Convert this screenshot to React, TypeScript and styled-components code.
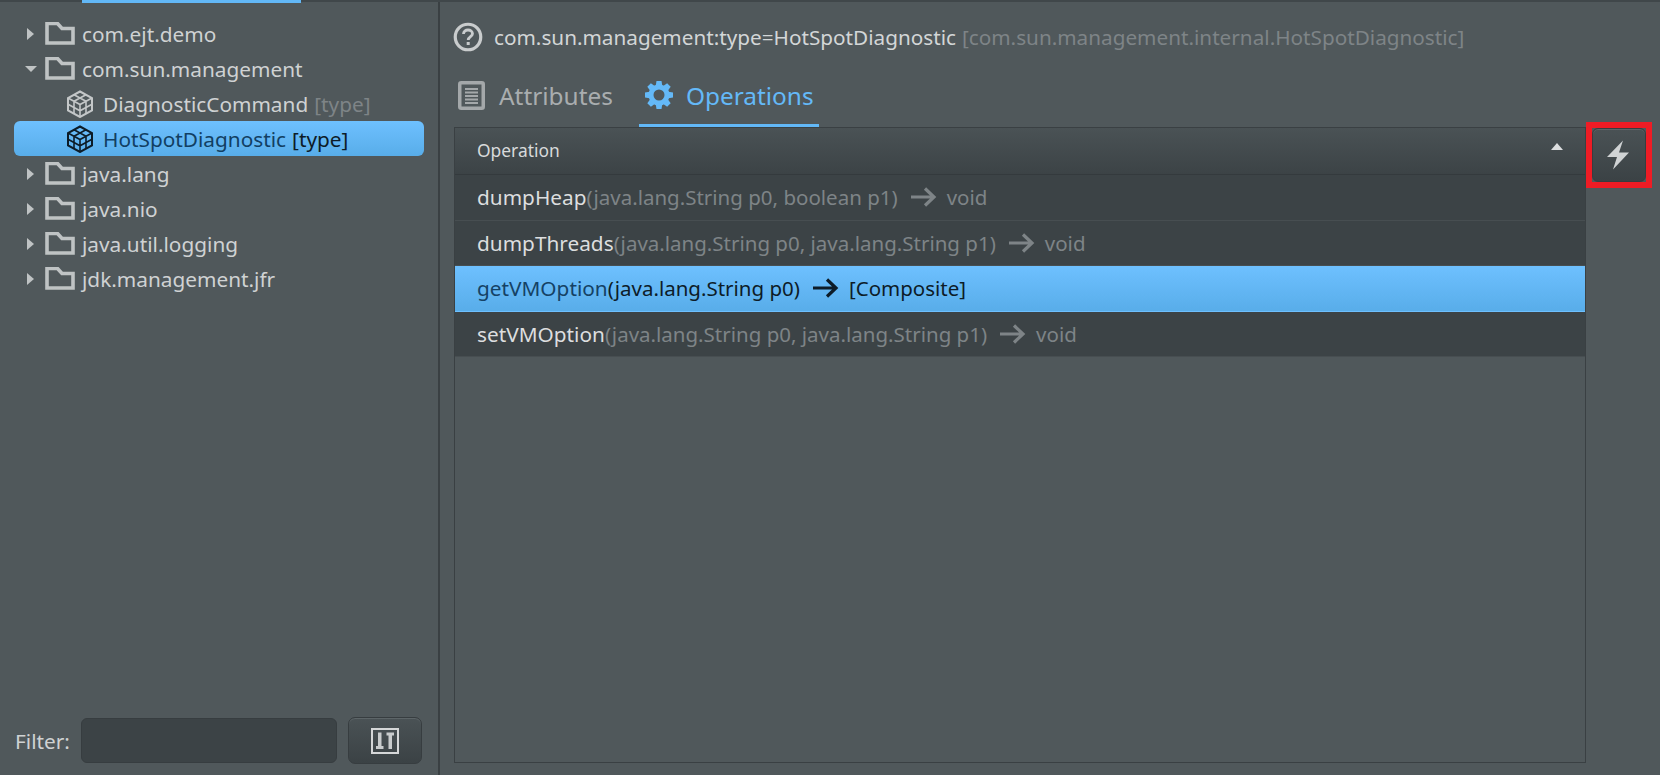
import React from "react";
import styled, { createGlobalStyle } from "styled-components";

const Global = createGlobalStyle`
  html, body { margin: 0; padding: 0; height: 775px; overflow: hidden; background: #50585b; }
  #root { height: 775px; }
  * { box-sizing: border-box; }
`;

const Page = styled.div`
  display: flex; width: 1660px; height: 775px; background: #50585b;
  font-family: "Noto Sans", "Open Sans", sans-serif; font-size: 20.8px; color: #cfd2d3;
  border-top: 2px solid #40474a; position: relative;
`;
const TopStripe = styled.div`
  position: absolute; left: 82px; top: -2px; width: 219px; height: 3px; background: #62b8f7;
`;
const Side = styled.aside`
  width: 440px; flex: none; display: flex; flex-direction: column;
  border-right: 2px solid #3a4043; padding: 14px 14px 11px 14px;
`;
const Tree = styled.div` flex: 1; display: flex; flex-direction: column; `;
const Row = styled.div<{ $depth: number; $sel?: boolean }>`
  height: 35px; display: flex; align-items: center; flex: none; width: 410px;
  padding: 1px 0 0 ${p => p.$depth === 0 ? 10 : 52}px;
  border-radius: 6px; line-height: 34px; white-space: nowrap;
  color: ${p => p.$sel ? "#123f63" : "#cfd2d3"};
  background: ${p => p.$sel ? "linear-gradient(#6ec0ff, #58ade9)" : "transparent"};
  svg { margin-top: -1px; }
`;
const Twist = styled.svg` width: 14px; height: 14px; flex: none; margin-right: 7px; `;
const FolderIcon = styled.svg` width: 30px; height: 23px; flex: none; margin-right: 7px; `;
const CubeIcon = styled.svg` width: 28px; height: 28px; flex: none; margin-right: 9px; `;
const Dim = styled.span` color: #7e8487; margin-left: 6px; `;
const DarkType = styled.span` color: #0d1c28; margin-left: 6px; `;
const FilterBar = styled.div` display: flex; align-items: center; height: 47px; flex: none; padding-left: 1px; `;
const FilterLabel = styled.label` width: 66px; color: #cfd2d3; `;
const FilterInput = styled.input`
  width: 256px; height: 45px; background: #3c4346; border: 1px solid #373d40; border-radius: 6px; outline: none;
`;
const ToolButton = styled.button`
  width: 74px; height: 47px; margin-left: 11px; padding: 0; display: flex; align-items: center; justify-content: center;
  background: linear-gradient(#4a5255, #3b4245); border: 1px solid #373d40; border-radius: 7px;
  box-shadow: inset 0 1px 0 #5d6568;
`;
const Main = styled.main`
  flex: 1; min-width: 0; display: flex; flex-direction: column; padding: 0 0 12px 14px;
`;
const Title = styled.div`
  height: 66px; display: flex; align-items: center; padding: 4px 0 0 0; flex: none; white-space: nowrap;
  color: #d3d6d7; font-size: 20.73px;
`;
const HelpIcon = styled.svg` width: 30px; height: 30px; flex: none; margin-right: 11px; margin-left: -1px; margin-top: -1px; `;
const TitleDim = styled.span` color: #7e8487; margin-left: 6px; `;
const Tabs = styled.div` display: flex; height: 59px; flex: none; `;
const Tab = styled.div<{ $active?: boolean }>`
  display: flex; align-items: center; font-size: 24.4px; height: 59px; padding: 0 5px 2px;
  color: ${p => p.$active ? "#64b9f8" : "#a9adaf"};
  border-bottom: 3px solid ${p => p.$active ? "#62b8f7" : "transparent"};
  &:first-child { padding-left: 4px; }
  & + & { margin-left: 21px; }
  svg { flex: none; margin-right: 12px; }
  &:first-child svg { margin-right: 14px; }
`;
const Content = styled.div` flex: 1; display: flex; min-height: 0; `;
const Table = styled.div`
  width: 1132px; flex: none; border: 1px solid #3a4043; display: flex; flex-direction: column;
`;
const THead = styled.div`
  height: 47px; flex: none; display: flex; align-items: center; justify-content: space-between;
  padding: 0 22px 2px 22px; font-size: 17.4px; color: #d8dadb;
  background: linear-gradient(#4a5255, #3c4346); border-bottom: 1px solid #343a3d;
`;
const SortIcon = styled.svg` width: 12px; height: 7px; margin-top: -7px; `;
const TRow = styled.div<{ $sel?: boolean }>`
  height: 45.5px; flex: none; display: flex; align-items: center; padding-left: 22px; white-space: nowrap;
  background: ${p => p.$sel ? "linear-gradient(#6ec0ff, #58ade9)" : "#3c4346"};
  border-bottom: 1px solid ${p => p.$sel ? "transparent" : "#474e51"};
`;
const OpName = styled.span<{ $sel?: boolean }>` font-size: 20.8px; color: ${p => p.$sel ? "#154265" : "#dcdedf"}; `;
const OpArgs = styled.span<{ $sel?: boolean }>` font-size: 20.5px; color: ${p => p.$sel ? "#0d1c28" : "#7e8487"}; `;
const Arrow = styled.svg` width: 27px; height: 22px; margin: 0 10px 0 12px; flex: none; `;
const Side2 = styled.div` margin-left: 0; `;
const Mark = styled.div`
  width: 66px; height: 66px; margin-top: -5px; border: 6px solid #ee1c25; display: flex; align-items: stretch;
`;
const RunButton = styled.button`
  flex: 1; padding: 0 2px 0 0; display: flex; align-items: center; justify-content: center;
  background: linear-gradient(#4a5255, #3b4245); border: 1px solid #373d40; border-radius: 6px;
  box-shadow: inset 0 1px 0 #5d6568;
`;

const c = "#bfc3c4";
const Folder = () => (
  <FolderIcon viewBox="0 0 30 23">
    <path d="M2 1.5H12.5L17 6.5H28V21H2Z" fill="none" stroke={c} strokeWidth="3.6" />
  </FolderIcon>
);
const Caret = ({ open }: { open?: boolean }) => (
  <Twist viewBox="0 0 14 14">
    {open ? <path d="M1 4H13L7 10Z" fill={c} /> : <path d="M3 1L10 7L3 13Z" fill={c} />}
  </Twist>
);
const Cube = ({ color }: { color: string }) => (
  <CubeIcon viewBox="0 0 28 28">
    <g fill="none" stroke={color}>
      <path strokeWidth="2" d="M14 1.5L26 8V20.5L14 27L2 20.5V8Z" />
      <path strokeWidth="1.6" d="M2 8L14 14.5L26 8M14 14.5V27M8 4.75L20 11.25M20 4.75L8 11.25M8 11.25V23.75M20 11.25V23.75M2 14.25L14 20.75L26 14.25" />
    </g>
  </CubeIcon>
);
const Gear = () => (
  <svg width="30" height="30" viewBox="0 0 30 30">
    {[0, 45, 90, 135, 180, 225, 270, 315].map(a => (
      <path key={a} d="M12.5 1H17.5L18.5 7H11.5Z" fill="#64b9f8" transform={`rotate(${a} 15 15)`} />
    ))}
    <circle cx="15" cy="15" r="8" fill="none" stroke="#64b9f8" strokeWidth="5" />
  </svg>
);
const RightArrow = ({ color }: { color: string }) => (
  <Arrow viewBox="0 0 27 22">
    <path d="M1 11H24M15 2.5L24 11L15 19.5" fill="none" stroke={color} strokeWidth="3.2" />
  </Arrow>
);

const rows: { label: string; open?: boolean }[] = [
  { label: "com.ejt.demo" },
  { label: "com.sun.management", open: true },
];
const rest = ["java.lang", "java.nio", "java.util.logging", "jdk.management.jfr"];

export default function App() {
  return (
    <Page>
      <Global />
      <TopStripe />
      <Side>
        <Tree>
          {rows.map(r => (
            <Row key={r.label} $depth={0}><Caret open={r.open} /><Folder />{r.label}</Row>
          ))}
          <Row $depth={1}><Cube color="#c4c7c8" />DiagnosticCommand<Dim>[type]</Dim></Row>
          <Row $depth={1} $sel><Cube color="#0d1c28" />HotSpotDiagnostic<DarkType>[type]</DarkType></Row>
          {rest.map(l => (
            <Row key={l} $depth={0}><Caret /><Folder />{l}</Row>
          ))}
        </Tree>
        <FilterBar>
          <FilterLabel>Filter:</FilterLabel>
          <FilterInput />
          <ToolButton aria-label="Options">
            <svg width="28" height="26" viewBox="0 0 28 26">
              <rect x="1" y="1" width="26" height="24" fill="none" stroke="#d5d7d8" strokeWidth="2" />
              <path d="M7 4.5H10.5V18H12.5V21H5V18H7Z" fill="#c9cccd" />
              <path d="M15.5 4.5H23V7.5H21V21H17.5V7.5H15.5Z" fill="#c9cccd" />
            </svg>
          </ToolButton>
        </FilterBar>
      </Side>
      <Main>
        <Title>
          <HelpIcon viewBox="0 0 30 30">
            <circle cx="15" cy="15" r="12.75" fill="none" stroke="#c9cccd" strokeWidth="3.2" />
            <path d="M10.5 12C10.5 9.5 12.5 8 15 8C17.5 8 19.5 9.5 19.5 11.8C19.5 14.5 15.2 14.8 15.2 18" fill="none" stroke="#c9cccd" strokeWidth="2.8" />
            <rect x="13.7" y="20" width="3" height="3" fill="#c9cccd" />
          </HelpIcon>
          com.sun.management:type=HotSpotDiagnostic
          <TitleDim>[com.sun.management.internal.HotSpotDiagnostic]</TitleDim>
        </Title>
        <Tabs>
          <Tab>
            <svg width="27" height="29" viewBox="0 0 27 29">
              <rect x="1.75" y="1.75" width="23.5" height="25.5" rx="1.5" fill="none" stroke="#a4a8aa" strokeWidth="3.5" />
              <path d="M7 8H20M7 11.5H20M7 15H20M7 18.5H20M7 22H20" stroke="#a4a8aa" strokeWidth="1.9" />
            </svg>
            Attributes
          </Tab>
          <Tab $active><Gear />Operations</Tab>
        </Tabs>
        <Content>
          <Table>
            <THead>
              Operation
              <SortIcon viewBox="0 0 12 7"><path d="M6 0L12 7H0Z" fill="#dcdedf" /></SortIcon>
            </THead>
            <TRow>
              <OpName>dumpHeap</OpName><OpArgs>(java.lang.String p0, boolean p1)</OpArgs>
              <RightArrow color="#7e8487" /><OpArgs>void</OpArgs>
            </TRow>
            <TRow>
              <OpName>dumpThreads</OpName><OpArgs>(java.lang.String p0, java.lang.String p1)</OpArgs>
              <RightArrow color="#7e8487" /><OpArgs>void</OpArgs>
            </TRow>
            <TRow $sel>
              <OpName $sel>getVMOption</OpName><OpArgs $sel>(java.lang.String p0)</OpArgs>
              <RightArrow color="#0d1c28" /><OpArgs $sel>[Composite]</OpArgs>
            </TRow>
            <TRow>
              <OpName>setVMOption</OpName><OpArgs>(java.lang.String p0, java.lang.String p1)</OpArgs>
              <RightArrow color="#7e8487" /><OpArgs>void</OpArgs>
            </TRow>
          </Table>
          <Side2>
            <Mark>
              <RunButton aria-label="Run">
                <svg width="24" height="30" viewBox="0 0 24 30">
                  <path d="M17 0.5L1 17H11L7 29.5L23 12.5H13Z" fill="#d0d3d4" />
                </svg>
              </RunButton>
            </Mark>
          </Side2>
        </Content>
      </Main>
    </Page>
  );
}
